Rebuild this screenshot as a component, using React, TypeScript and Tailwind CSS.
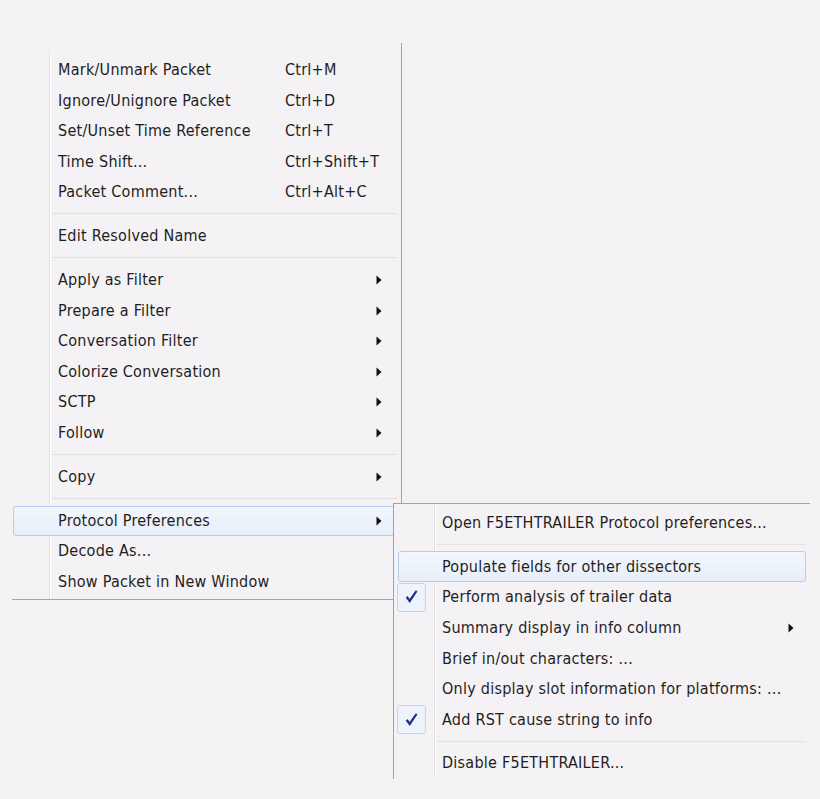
import React from "react";

type Entry =
  | { kind: "sep" }
  | { kind: "item"; label: string; shortcut?: string; sub?: boolean; active?: boolean; checked?: boolean };

const mainItems: Entry[] = [
  { kind: "item", label: "Mark/Unmark Packet", shortcut: "Ctrl+M" },
  { kind: "item", label: "Ignore/Unignore Packet", shortcut: "Ctrl+D" },
  { kind: "item", label: "Set/Unset Time Reference", shortcut: "Ctrl+T" },
  { kind: "item", label: "Time Shift...", shortcut: "Ctrl+Shift+T" },
  { kind: "item", label: "Packet Comment...", shortcut: "Ctrl+Alt+C" },
  { kind: "sep" },
  { kind: "item", label: "Edit Resolved Name" },
  { kind: "sep" },
  { kind: "item", label: "Apply as Filter", sub: true },
  { kind: "item", label: "Prepare a Filter", sub: true },
  { kind: "item", label: "Conversation Filter", sub: true },
  { kind: "item", label: "Colorize Conversation", sub: true },
  { kind: "item", label: "SCTP", sub: true },
  { kind: "item", label: "Follow", sub: true },
  { kind: "sep" },
  { kind: "item", label: "Copy", sub: true },
  { kind: "sep" },
  { kind: "item", label: "Protocol Preferences", sub: true, active: true },
  { kind: "item", label: "Decode As..." },
  { kind: "item", label: "Show Packet in New Window" },
];

const prefItems: Entry[] = [
  { kind: "item", label: "Open F5ETHTRAILER Protocol preferences..." },
  { kind: "sep" },
  { kind: "item", label: "Populate fields for other dissectors", active: true },
  { kind: "item", label: "Perform analysis of trailer data", checked: true },
  { kind: "item", label: "Summary display in info column", sub: true },
  { kind: "item", label: "Brief in/out characters: ..." },
  { kind: "item", label: "Only display slot information for platforms: ..." },
  { kind: "item", label: "Add RST cause string to info", checked: true },
  { kind: "sep" },
  { kind: "item", label: "Disable F5ETHTRAILER..." },
];

const Arrow = () => (
  <svg width="6" height="10" viewBox="0 0 6 10" className="shrink-0">
    <path d="M0.5 0.5L5.5 5L0.5 9.5Z" fill="#111" />
  </svg>
);

const Check = () => (
  <span className="flex h-[29px] w-[29px] shrink-0 items-center justify-center rounded-[3px] border border-[#c3d5ee] bg-[#eef3fb]">
    <svg width="13" height="14" viewBox="0 0 13 14">
      <path d="M1.2 7.6L4.7 12.4L12 1.4L10.8 0.8L4.6 9.6L2.6 6.6Z" fill="#1d2a86" stroke="#1d2a86" strokeWidth="0.8" strokeLinejoin="round" />
    </svg>
  </span>
);

const hl = "border-[#b3cdef] bg-[linear-gradient(to_bottom,#f4f7fc,#e6eef9)]";

function MainMenu() {
  return (
    <div className="w-[390px] border-r border-[#a3a3a3]">
      <div className="h-[9px]" />
      <div className="border-b border-[#a3a3a3] bg-[#f5f2f5] bg-[linear-gradient(to_right,transparent_37px,#e3e0e3_37px,#e3e0e3_38px,#ffffff_38px,#ffffff_39px,transparent_39px)] px-[1px] pt-[3px] pb-[2px]">
        {mainItems.map((e, i) =>
          e.kind === "sep" ? (
            <div key={i} className="flex h-[13.5px] items-center pl-[39px] pr-[3px]">
              <div className="h-[2px] w-full border-t border-[#e3e0e3] border-b-white" />
            </div>
          ) : (
            <div
              key={i}
              className={`flex h-[30.5px] items-center rounded-[3px] border pl-[44px] ${e.active ? hl + " mr-[-8px] pr-[25px]" : "border-transparent pr-[17px]"}`}
            >
              <span className="w-[227px] shrink-0 whitespace-nowrap">{e.label}</span>
              <span className="flex-1 whitespace-nowrap">{e.shortcut}</span>
              {e.sub && <Arrow />}
            </div>
          )
        )}
      </div>
    </div>
  );
}

function PrefMenu() {
  return (
    <div className="absolute left-[393px] top-[503px] w-[417px] border-l border-t border-[#a3a3a3] bg-[#f5f2f5] bg-[linear-gradient(to_right,transparent_40px,#e3e0e3_40px,#e3e0e3_41px,#ffffff_41px,#ffffff_42px,transparent_42px)] pt-[4px] pl-[4px] pr-[4px]">
      {prefItems.map((e, i) =>
        e.kind === "sep" ? (
          <div key={i} className="flex h-[12.5px] items-center pl-[39px]">
            <div className="h-[2px] w-full border-t border-[#e3e0e3] border-b-white" />
          </div>
        ) : (
          <div
            key={i}
            className={`flex h-[30.7px] items-center rounded-[3px] border pr-[11px] ${e.active ? hl : "border-transparent"}`}
          >
            <span className="ml-[-2px] flex w-[29px] shrink-0 justify-center">{e.checked && <Check />}</span>
            <span className="ml-[16px] flex-1 whitespace-nowrap">{e.label}</span>
            {e.sub && <Arrow />}
          </div>
        )
      )}
    </div>
  );
}

export default function App() {
  return (
    <div className="relative min-h-screen bg-[#f3f3f3] font-['DejaVu_Sans_Condensed','DejaVu_Sans',sans-serif] text-[16px] tracking-[0.25px] text-[#1e1e1e]">
      <div className="pl-3 pt-[43px]">
        <MainMenu />
      </div>
      <PrefMenu />
    </div>
  );
}
